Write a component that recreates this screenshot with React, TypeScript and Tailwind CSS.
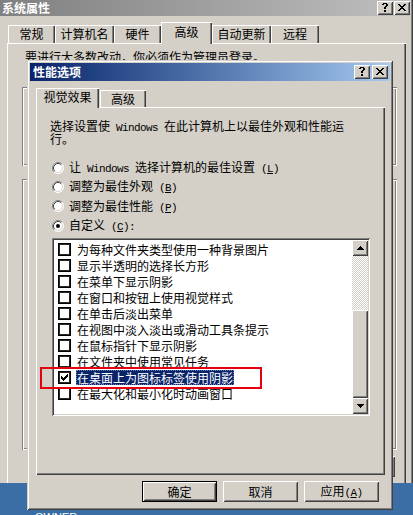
import React from "react";

const CJK = "font-['Noto_Sans_CJK_SC',sans-serif]";
const MONO = "font-['Liberation_Mono',monospace] text-[11px] tracking-[-0.6px] leading-none";

const RAISED =
  "shadow-[inset_1px_1px_0_#ffffff,inset_-1px_-1px_0_#404040,inset_2px_2px_0_#d4d0c8,inset_-2px_-2px_0_#808080]";
const FRAME =
  "shadow-[inset_1px_1px_0_#d4d0c8,inset_-1px_-1px_0_#404040,inset_2px_2px_0_#ffffff,inset_-2px_-2px_0_#808080]";
const SUNKEN =
  "shadow-[inset_1px_1px_0_#808080,inset_-1px_-1px_0_#ffffff,inset_2px_2px_0_#404040,inset_-2px_-2px_0_#d4d0c8]";
const GROUP =
  "shadow-[inset_1px_1px_0_#808080,inset_2px_2px_0_#ffffff,inset_-1px_-1px_0_#ffffff,inset_-2px_-2px_0_#808080]";

function Pixels({ rows, color = "#000" }: { rows: string[]; color?: string }) {
  const w = rows[0].length;
  const h = rows.length;
  const rects: React.ReactNode[] = [];
  rows.forEach((r, y) =>
    r.split("").forEach((c, x) => {
      if (c === "#") rects.push(<rect key={`${x}-${y}`} x={x} y={y} width={1} height={1} fill={color} />);
    })
  );
  return (
    <svg width={w} height={h} viewBox={`0 0 ${w} ${h}`} shapeRendering="crispEdges">
      {rects}
    </svg>
  );
}

const HELP = [".####.", "##..##", "....##", "...##.", "..##..", "..##..", "......", "..##..", "..##.."];
const CLOSE = ["##....##", ".##..##.", "..####..", "...##...", "..####..", ".##..##.", "##....##"];
const CHECK = ["......#", ".....##", "#...###", "##.###.", "#####..", ".###...", "..#...."];
const UP = ["...#...", "..###..", ".#####.", "#######"];
const DOWN = ["#######", ".#####.", "..###..", "...#..."];

function CapBtn({ kind }: { kind: "help" | "close" }) {
  return (
    <div className={`w-[16px] h-[14px] bg-[#d4d0c8] ${RAISED} flex items-center justify-center`}>
      <div className="mt-[-1px]">
        <Pixels rows={kind === "help" ? HELP : CLOSE} />
      </div>
    </div>
  );
}

function Radio({ checked }: { checked?: boolean }) {
  return (
    <svg width="12" height="12" viewBox="0 0 12 12" className="shrink-0">
      <circle cx="6" cy="6" r="5.5" fill="#ffffff" />
      <path d="M2.11 9.89 A5.5 5.5 0 0 1 9.89 2.11" stroke="#808080" strokeWidth="1" fill="none" />
      <path d="M9.89 2.11 A5.5 5.5 0 0 1 2.11 9.89" stroke="#ffffff" strokeWidth="1" fill="none" />
      <path d="M2.82 9.18 A4.5 4.5 0 0 1 9.18 2.82" stroke="#404040" strokeWidth="1" fill="none" />
      <path d="M9.18 2.82 A4.5 4.5 0 0 1 2.82 9.18" stroke="#d4d0c8" strokeWidth="1" fill="none" />
      {checked && <circle cx="6" cy="6" r="2" fill="#000" />}
    </svg>
  );
}

function CheckBox({ checked }: { checked?: boolean }) {
  return (
    <div className="w-[13px] h-[13px] shrink-0 bg-white shadow-[inset_0_0_0_1px_#000000,inset_0_0_0_2px_#262626] flex items-center justify-center">
      {checked && <Pixels rows={CHECK} />}
    </div>
  );
}

function Btn({ children, def }: { children: React.ReactNode; def?: boolean }) {
  return (
    <div
      className={`w-[75px] h-[21px] bg-[#d4d0c8] flex items-center justify-center ${
        def
          ? "shadow-[inset_0_0_0_1px_#000000,inset_2px_2px_0_#ffffff,inset_-2px_-2px_0_#404040,inset_3px_3px_0_#d4d0c8,inset_-3px_-3px_0_#808080]"
          : RAISED
      }`}
    >
      {children}
    </div>
  );
}

const U = ({ c }: { c: string }) => <span className="underline underline-offset-[1px]">{c}</span>;

const items = [
  "为每种文件夹类型使用一种背景图片",
  "显示半透明的选择长方形",
  "在菜单下显示阴影",
  "在窗口和按钮上使用视觉样式",
  "在单击后淡出菜单",
  "在视图中淡入淡出或滑动工具条提示",
  "在鼠标指针下显示阴影",
  "在文件夹中使用常见任务",
  "在桌面上为图标标签使用阴影",
  "在最大化和最小化时动画窗口",
];

const TAB_SH = "shadow-[inset_1px_1px_0_#ffffff,inset_-1px_0_0_#404040,inset_-2px_0_0_#808080]";

function BgTab({ label, w, sel }: { label: string; w: string; sel?: boolean }) {
  return (
    <div
      className={`${w} flex items-center justify-center bg-[#d4d0c8] ${TAB_SH} ${
        sel ? "h-[22px] mb-[-1px] relative z-10 pb-[3px]" : "h-[18px]"
      }`}
    >
      {label}
    </div>
  );
}

export default function App() {
  return (
    <div className={`w-[413px] h-[515px] relative overflow-hidden bg-[#3a6ea5] text-[12px] leading-[14px] text-black ${CJK}`}>
      {/* Background window: 系统属性 */}
      <div className="h-[483px] bg-[#d4d0c8] flex flex-col pr-[3px] shadow-[inset_-1px_0_0_#404040,inset_-2px_0_0_#808080]">
        <div className="h-[16px] bg-gradient-to-r from-[#808080] to-[#c0c0c0] flex items-center justify-between pl-[2px]">
          <span className="text-white font-bold text-[12px] leading-[14px]">系统属性</span>
          <div className="flex gap-[1px] mt-[-1px]">
            <CapBtn kind="help" />
            <CapBtn kind="close" />
          </div>
        </div>
        <div className="flex-1 flex flex-col pl-[7px] pr-[4px]">
          <div className="flex items-end h-[27px] pl-[1px]">
            <BgTab label="常规" w="w-[47px]" />
            <BgTab label="计算机名" w="w-[59px]" />
            <BgTab label="硬件" w="w-[47px]" />
            <BgTab label="高级" w="w-[51px]" sel />
            <BgTab label="自动更新" w="w-[59px]" />
            <BgTab label="远程" w="w-[48px]" />
          </div>
          <div className="flex-1 shadow-[inset_1px_1px_0_#ffffff,inset_-1px_0_0_#404040,inset_-2px_0_0_#808080] pt-[7px] pl-[15px] pr-[9px] flex flex-col">
            <div className="pl-[3px] h-[14px]">
              <div className="h-[10px] overflow-hidden">要进行大多数改动，你必须作为管理员登录。</div>
            </div>
            <div className={`mt-[23px] h-[79px] ${GROUP}`} />
            <div className={`mt-[13px] h-[271px] ${GROUP}`} />
            <div className="mt-[6px] flex justify-end pr-[2px]">
              <Btn>错误报告(R)</Btn>
            </div>
          </div>
        </div>
      </div>

      {/* Desktop label */}
      <div className="pl-[35px] pt-[28px] text-white font-['Liberation_Sans',sans-serif] text-[11px] leading-[12px]">OWNER</div>

      {/* Front dialog: 性能选项 */}
      <div className={`absolute left-[27px] top-[60px] w-[366px] h-[450px] bg-[#d4d0c8] p-[3px] ${FRAME} flex flex-col`}>
        <div className="h-[18px] bg-gradient-to-r from-[#0a246a] to-[#a6caf0] flex items-center justify-between pl-[3px] pr-[2px]">
          <span className="text-white font-bold leading-[14px]">性能选项</span>
          <div className="flex gap-[2px]">
            <CapBtn kind="help" />
            <CapBtn kind="close" />
          </div>
        </div>
        <div className="flex-1 flex flex-col px-[6px]">
          <div className="flex items-end h-[26px]">
            <div className={`w-[63px] h-[20px] mb-[-1px] relative z-10 bg-[#d4d0c8] flex items-center justify-center pb-[2px] ${TAB_SH}`}>
              视觉效果
            </div>
            <div className={`w-[46px] h-[17px] ml-[1px] bg-[#d4d0c8] flex items-center justify-center ${TAB_SH}`}>
              高级
            </div>
          </div>
          <div className="w-[349px] h-[368px] flex flex-col pl-[14px] pt-[12px] shadow-[inset_1px_1px_0_#ffffff,inset_-1px_-1px_0_#404040,inset_-2px_-2px_0_#808080]">
            <div className="flex flex-col">
              <div className="h-[13px] leading-[13px] whitespace-nowrap">
                选择设置使<span className={MONO}> Windows </span>在此计算机上以最佳外观和性能运
              </div>
              <div className="h-[13px] leading-[13px]">行。</div>
            </div>
            <div className="mt-[13px] flex flex-col pl-[2px]">
              <div className="h-[19px] flex items-center gap-[5px] whitespace-nowrap">
                <Radio />
                <span>
                  让<span className={MONO}> Windows </span>选择计算机的最佳设置<span className={MONO}> (<U c="L" />)</span>
                </span>
              </div>
              <div className="h-[19px] flex items-center gap-[5px]">
                <Radio />
                <span>
                  调整为最佳外观<span className={MONO}> (<U c="B" />)</span>
                </span>
              </div>
              <div className="h-[20px] flex items-center gap-[5px]">
                <Radio />
                <span>
                  调整为最佳性能<span className={MONO}> (<U c="P" />)</span>
                </span>
              </div>
              <div className="h-[19px] flex items-center gap-[5px]">
                <Radio checked />
                <span>
                  自定义<span className={MONO}> (<U c="C" />):</span>
                </span>
              </div>
            </div>
            <div className={`mt-[3px] ml-[2px] w-[318px] h-[178px] bg-white p-[2px] flex ${SUNKEN}`}>
              <div className="flex-1 flex flex-col pt-[1px] overflow-hidden">
                {items.map((t, i) => {
                  const sel = i === 8;
                  return (
                    <div key={t} className="h-[16px] shrink-0 flex items-center pl-[4px] whitespace-nowrap">
                      <CheckBox checked={sel} />
                      <span
                        className={`ml-[5px] px-[1px] h-[15px] leading-[15px] ${
                          sel ? "bg-[#0a246a] text-white outline-1 outline-dotted outline-offset-[-1px] outline-[#6a7ab0]" : ""
                        }`}
                      >
                        {t}
                      </span>
                    </div>
                  );
                })}
              </div>
              <div className="w-[16px] flex flex-col">
                <div className={`h-[16px] bg-[#d4d0c8] ${RAISED} flex items-center justify-center`}>
                  <Pixels rows={UP} />
                </div>
                <div className="h-[54px] bg-[image:repeating-conic-gradient(#d4d0c8_0_25%,#ffffff_0_50%)] bg-[length:2px_2px]" />
                <div className={`flex-1 bg-[#d4d0c8] ${RAISED}`} />
                <div className={`h-[16px] bg-[#d4d0c8] ${RAISED} flex items-center justify-center`}>
                  <Pixels rows={DOWN} />
                </div>
              </div>
            </div>
          </div>
          <div className="mt-[6px] flex justify-end gap-[6px] pr-[5px]">
            <Btn def>确定</Btn>
            <Btn>取消</Btn>
            <Btn>
              <span>
                应用<span className={MONO}>(<U c="A" />)</span>
              </span>
            </Btn>
          </div>
        </div>
      </div>

      {/* Annotation */}
      <div className="absolute left-[40px] top-[367px] w-[222px] h-[22px] border-2 border-[#e4000f] z-20" />
    </div>
  );
}
